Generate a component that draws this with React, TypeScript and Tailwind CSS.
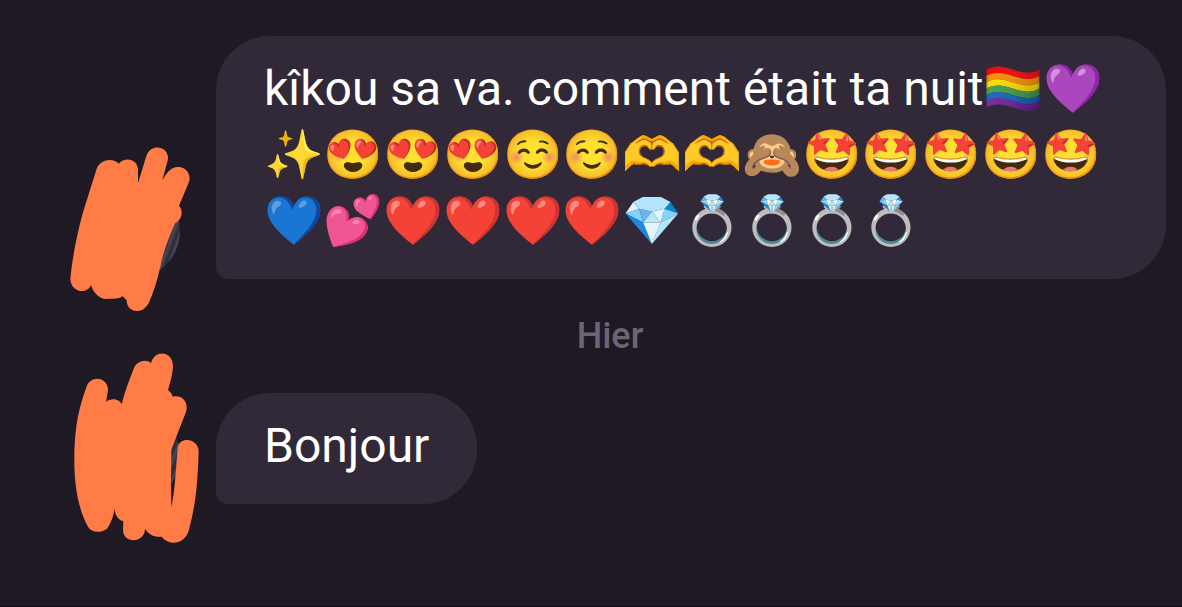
import type { ReactNode } from "react";

const FIRST_MESSAGE = [
  "kîkou sa va. comment était ta nuit🏳️‍🌈💜",
  "✨😍😍😍☺️☺️🫶🫶🙈🤩🤩🤩🤩🤩",
  "💙💕❤️❤️❤️❤️💎💍💍💍💍",
];

function Avatar({ children }: { children: ReactNode }) {
  return (
    <div className="relative h-24 w-24 shrink-0 rounded-full bg-[repeating-linear-gradient(110deg,#2e2838_0px,#474858_3px,#363646_5px,#2e2838_7px)]">
      {children}
    </div>
  );
}

function Bubble({ children }: { children: ReactNode }) {
  return (
    <div className="rounded-[54px] rounded-bl-[12px] bg-[#312937] px-12 pt-5 pb-[25px] text-[48px] leading-[66px] text-white">
      {children}
    </div>
  );
}

export default function App() {
  return (
    <main className="min-h-screen border-b border-[#0d0a10] bg-[#1f1923] pt-9 font-['Roboto','Noto_Color_Emoji',sans-serif]">
      {/* First message */}
      <div className="flex items-end gap-9 pr-4 pl-[84px]">
        <Avatar>
          <svg className="absolute -top-[53px] -left-[34px] h-[200px] w-[180px] max-w-none" viewBox="0 0 540 600" aria-hidden="true">
            <path
              fill="#ff7c47"
              d="M140 116C150 88 190 82 206 101C228 76 266 90 264 122L264 160L289 78C302 38 357 48 354 88L337 151C350 129 360 112 384 111C410 110 425 136 416 158L387 227C400 239 398 268 376 279C352 334 343 356 331 410C320 457 311 484 298 515C279 557 230 549 230 511L218 499C204 510 185 504 166 507C145 505 129 485 123 465C110 495 62 487 61 446C66 390 82 306 100 244Z"
            />
          </svg>
        </Avatar>
        <div className="min-w-0 flex-1">
          <Bubble>
            {FIRST_MESSAGE.map((line) => (
              <p key={line} className="whitespace-nowrap">{line}</p>
            ))}
          </Bubble>
        </div>
      </div>

      {/* Date separator */}
      <p className="py-9 pl-[38px] text-center text-[36px] leading-[42px] font-medium text-[#6d6475]">Hier</p>

      {/* Second message */}
      <div className="flex items-end gap-9 pr-4 pl-[84px]">
        <Avatar>
          <svg className="absolute -top-[68px] -left-[34px] h-[220px] w-[180px] max-w-none" viewBox="0 0 540 660" aria-hidden="true">
            <path
              fill="#ff7c47"
              d="M109 142C119 105 174 108 174 151L168 186C180 173 208 175 215 193C225 152 237 123 251 86C260 63 288 56 303 69C315 26 369 34 369 78C368 105 360 128 354 151C361 155 367 163 368 170C396 163 417 186 408 216L379 290L364 330L363 420L364 502C375 450 378 385 383 323C388 288 445 293 446 334C443 427 438 489 419 560C411 613 360 621 335 590C315 593 295 583 285 566C286 609 220 614 219 570L220 543C206 541 195 526 194 506C189 534 181 552 171 566C154 580 124 578 115 562C84 507 72 434 73 349C75 259 85 210 109 142Z"
            />
          </svg>
        </Avatar>
        <Bubble>
          <p>Bonjour</p>
        </Bubble>
      </div>
    </main>
  );
}
